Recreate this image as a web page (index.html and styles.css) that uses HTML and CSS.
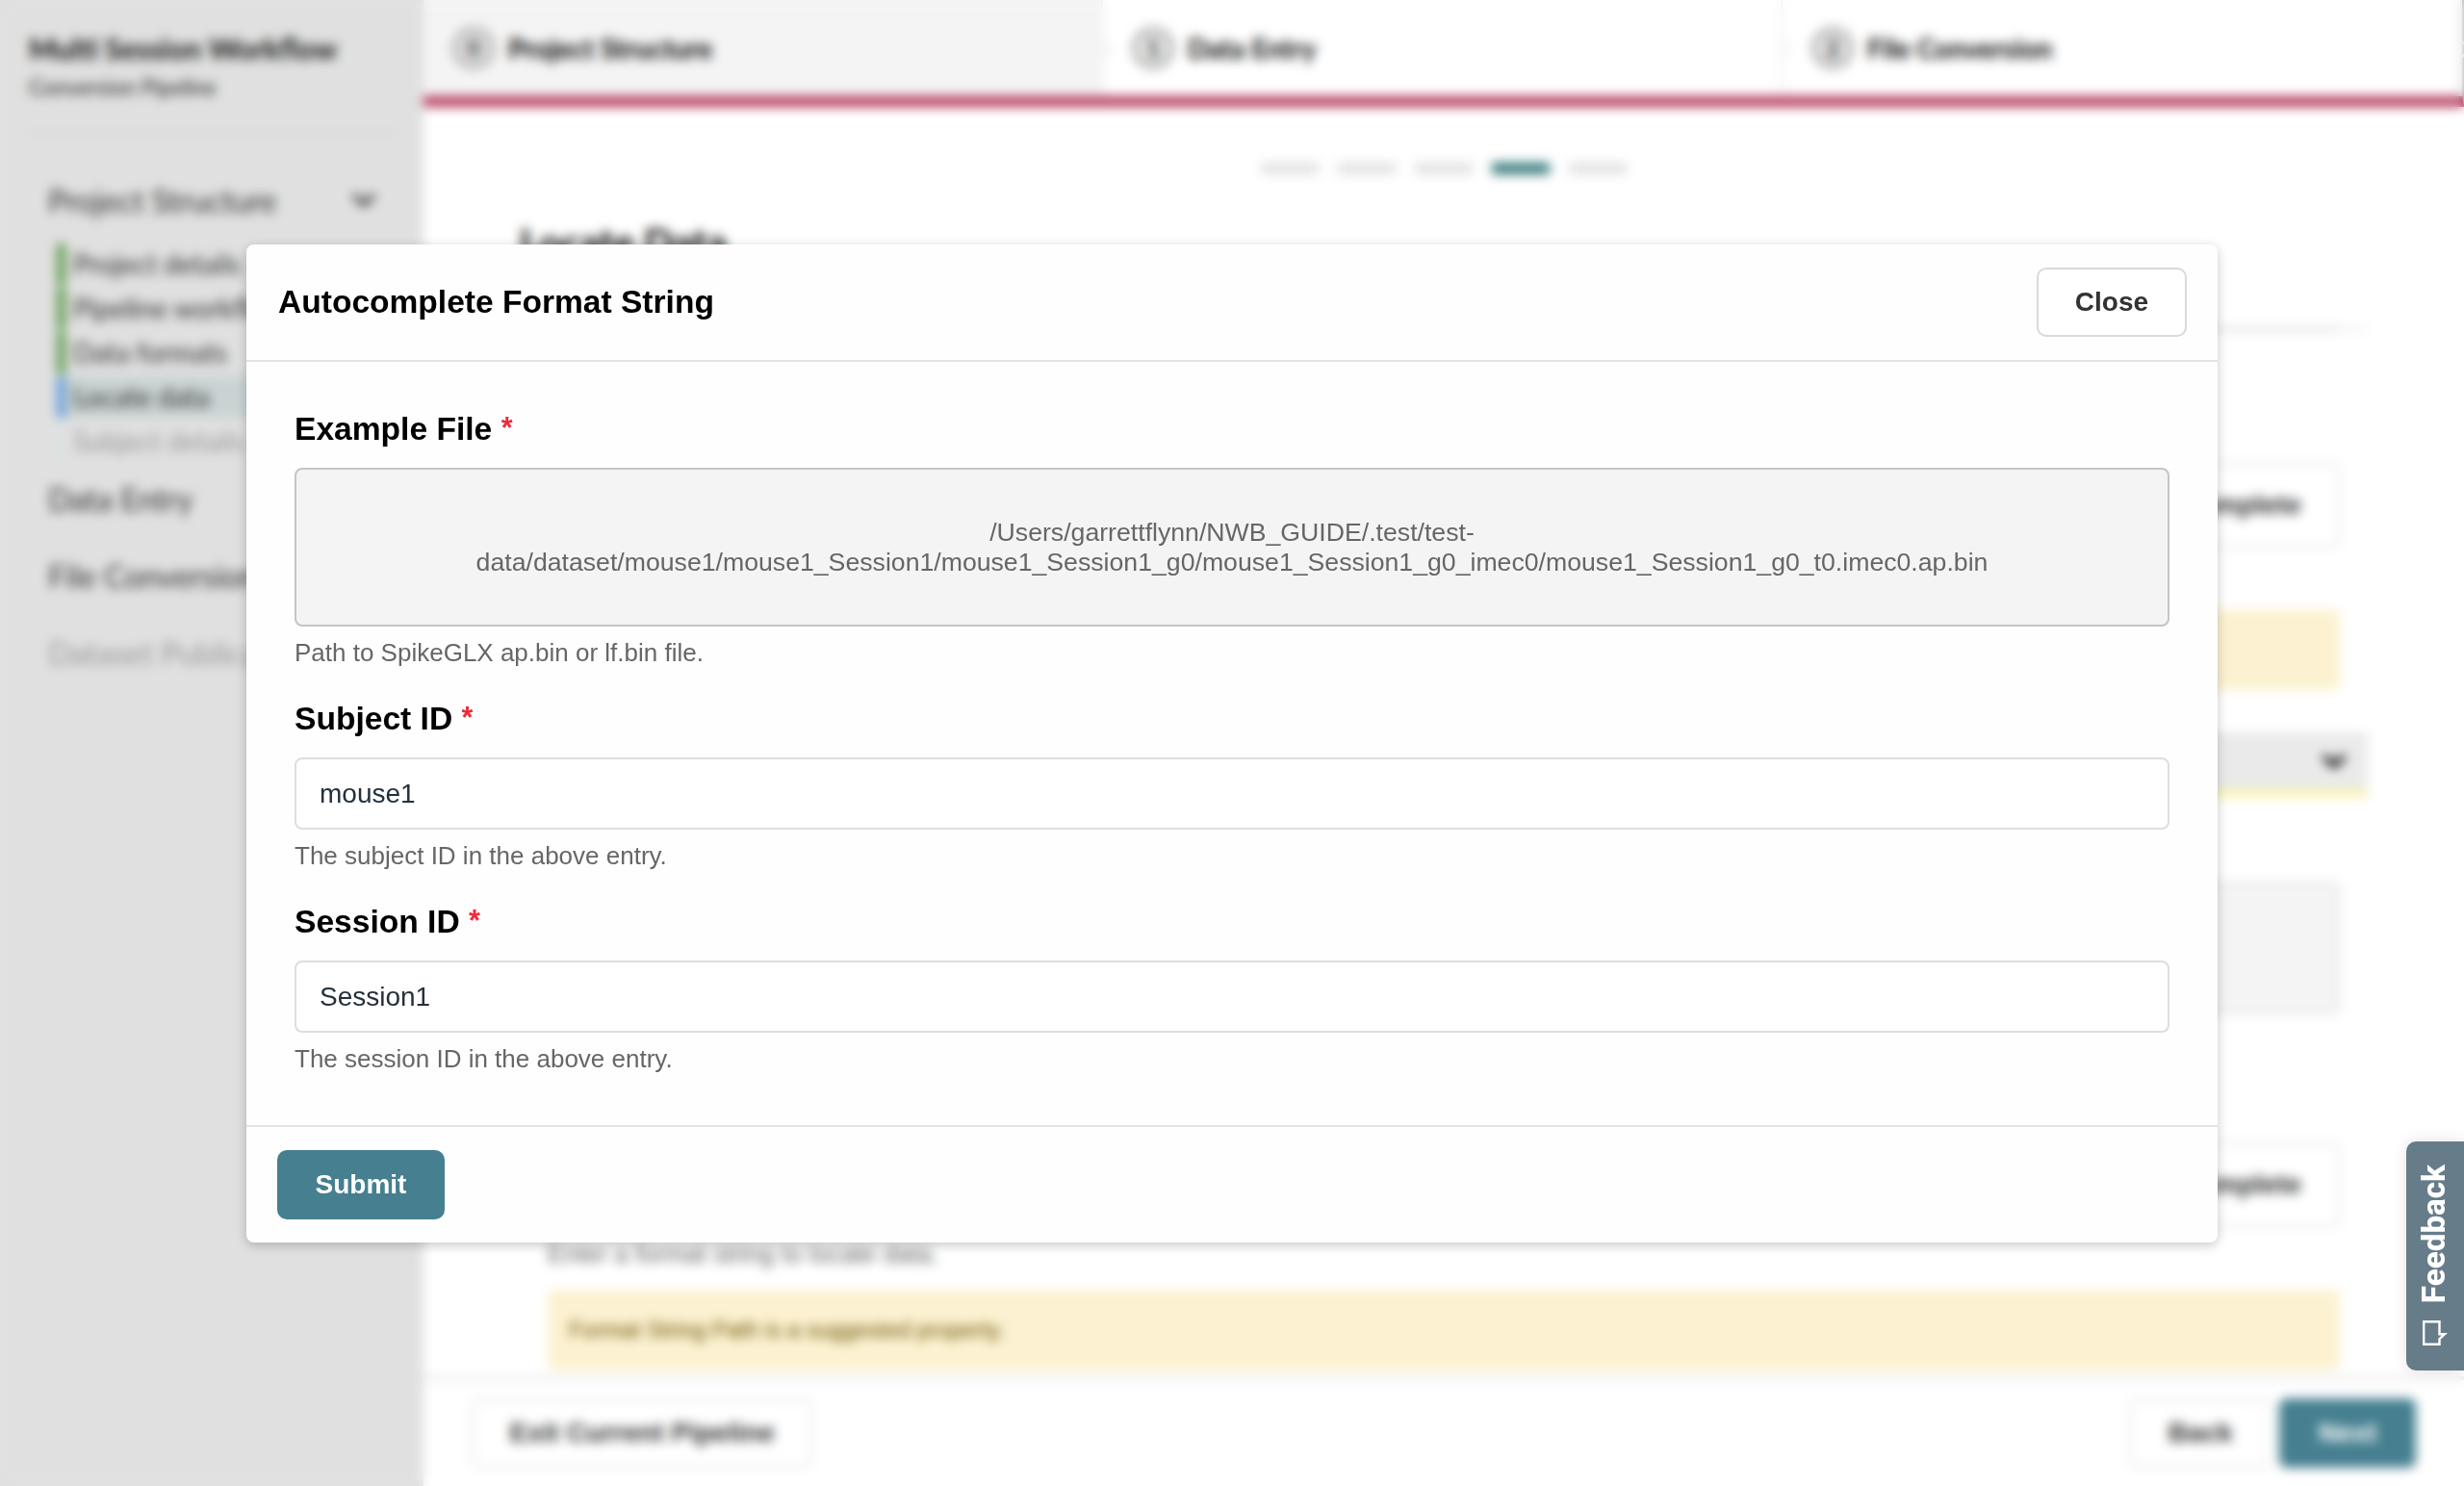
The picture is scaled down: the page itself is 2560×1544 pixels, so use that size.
FILE: index.html
```html
<!DOCTYPE html>
<html lang="en">
<head>
<meta charset="utf-8">
<title>NWB GUIDE</title>
<link rel="stylesheet" href="styles.css">
</head>
<body>
<div class="app">
  <aside class="sidebar">
    <div class="brand">
      <h1>Multi Session Workflow</h1>
      <p>Conversion Pipeline</p>
    </div>
    <nav class="sections">
      <div class="section open"><span>Project Structure</span><svg class="chev" viewBox="0 0 24 16"><path d="M2 3l10 9 10-9" fill="none" stroke="currentColor" stroke-width="4.500"/></svg></div>
      <ul class="steps">
        <li class="done">Project details</li>
        <li class="done">Pipeline workflow</li>
        <li class="done">Data formats</li>
        <li class="current">Locate data</li>
        <li class="todo">Subject details</li>
      </ul>
      <div class="section">Data Entry</div>
      <div class="section">File Conversion</div>
      <div class="section disabled">Dataset Publication</div>
    </nav>
  </aside>
  <div class="page">
    <header class="tabs">
      <div class="tab selected"><b>0</b><span>Project Structure</span></div>
      <div class="tab"><b>1</b><span>Data Entry</span></div>
      <div class="tab"><b>2</b><span>File Conversion</span></div>
    </header>
    <main class="content">
      <div class="progress"><i></i><i></i><i></i><i class="on"></i><i></i></div>
      <h2>Locate Data</h2>
      <hr>
      <section class="group">
        <div class="row"><button class="btn">Autocomplete</button></div>
        <div class="warning"></div>
      </section>
      <div class="accordion"><svg class="chev" viewBox="0 0 24 16"><path d="M2 3l10 9 10-9" fill="none" stroke="currentColor" stroke-width="5"/></svg></div>
      <section class="group second">
        <div class="dropzone"></div>
        <div class="row"><button class="btn">Autocomplete</button></div>
        <p class="hint">Enter a format string to locate data.</p>
        <div class="warning">Format String Path is a suggested property.</div>
      </section>
    </main>
    <footer class="actions">
      <button class="btn">Exit Current Pipeline</button>
      <div class="right"><button class="btn">Back</button><button class="btn primary">Next</button></div>
    </footer>
  </div>
</div>

<div class="overlay">
  <div class="modal" role="dialog">
    <header class="modal-head">
      <h3>Autocomplete Format String</h3>
      <button class="button">Close</button>
    </header>
    <div class="modal-body">
      <div class="field">
        <label>Example File <em>*</em></label>
        <div class="file">/Users/garrettflynn/NWB_GUIDE/.test/test-<br>data/dataset/mouse1/mouse1_Session1/mouse1_Session1_g0/mouse1_Session1_g0_imec0/mouse1_Session1_g0_t0.imec0.ap.bin</div>
        <p>Path to SpikeGLX ap.bin or lf.bin file.</p>
      </div>
      <div class="field">
        <label>Subject ID <em>*</em></label>
        <div class="input">mouse1</div>
        <p>The subject ID in the above entry.</p>
      </div>
      <div class="field">
        <label>Session ID <em>*</em></label>
        <div class="input">Session1</div>
        <p>The session ID in the above entry.</p>
      </div>
    </div>
    <footer class="modal-foot"><button class="button primary">Submit</button></footer>
  </div>
</div>

<div class="feedback">
  <span>Feedback</span>
  <svg viewBox="0 0 26 26"><path d="M1.200 1.200H17.500V14.200H23L17.500 19.200V24.800H1.200Z" fill="none" stroke="#fff" stroke-width="2.400"/></svg>
</div>
</body>
</html>
```
FILE: styles.css
```css
* { box-sizing: border-box; }
body { margin: 0; width: 2560px; height: 1544px; overflow: hidden; background: #fff; font-family: "Liberation Sans", Arial, sans-serif; color: #000; }
h1, h2, h3, p, ul { margin: 0; padding: 0; font-weight: normal; }
button { font-family: inherit; margin: 0; }

.app { display: flex; width: 2560px; height: 1544px; }
.sidebar { width: 440px; flex: none; background: #e0e0e0; font-family: Lato, sans-serif; color: #333; }
.brand { margin: 0 30px; padding-top: 29px; height: 140px; border-bottom: 2px solid #d2d2d2; }
.brand h1 { font-size: 30px; line-height: 42px; font-weight: 700; color: #111; white-space: nowrap; }
.brand p { font-size: 22.400px; line-height: 40px; color: #222; }
.sections { padding-top: 40px; }
.section { display: flex; align-items: center; justify-content: space-between; height: 80px; padding: 0 49px 0 50px; font-size: 32px; white-space: nowrap; }
.section.open { height: 56px; }
.section.disabled { color: #999; }
.chev { width: 26px; height: 18px; }
.steps { list-style: none; margin: 17px 24px 0 59px; height: 225px; }
.steps li { height: 43px; margin-bottom: 3px; line-height: 42px; padding-left: 8px; border-left: 9px solid #5f9c50; font-size: 28px; white-space: nowrap; }
.steps .current { background: #cad3d3; border-color: #649ddb; }
.steps .todo { border-color: #dde1e1; color: #999; }

.page { flex: 1; display: flex; flex-direction: column; }
.tabs { display: flex; height: 111px; flex: none; border-bottom: 11px solid #b4375a; border-right: 2px solid #bbb; font-family: Lato, sans-serif; }
.tab { position: relative; width: 706px; flex: none; display: flex; align-items: center; gap: 14px; padding-left: 30px; border-right: 2px solid #ececec; font-size: 28px; font-weight: 700; }
.tab.selected { background: #f4f4f4; }
.tab::after { content: ""; position: absolute; right: -8px; top: 43px; width: 14px; height: 14px; background: inherit; border: 2px solid #ececec; border-width: 2px 2px 0 0; transform: rotate(45deg); }
.tab b { width: 44px; height: 44px; border-radius: 50%; border: 5px solid #aaa; background: #e9e9e9; font-size: 24px; line-height: 34px; text-align: center; color: #333; }
.content { flex: 1; overflow: hidden; }
.progress { display: flex; justify-content: center; gap: 20px; padding-top: 58px; }
.progress i { width: 60px; height: 12px; background: #e2e2e2; }
.progress .on { background: #37797c; }
.content h2 { margin: 48px 0 0 100px; font-family: Lato, sans-serif; font-size: 40.400px; line-height: 46px; font-weight: 700; }
.content hr { margin: 65px 100px 0; height: 4px; border: 0; background: linear-gradient(90deg, #ddd 98.500%, #f1f1f1 98.500%); }
.group { margin: 137px 129px 0; }
.row { display: flex; justify-content: flex-end; }
.btn { height: 88px; padding: 0 38px; border: 2px solid #e3e3e3; border-radius: 8px; background: #fff; font-size: 28px; font-weight: 700; color: #333; }
.warning { margin-top: 64px; height: 84px; line-height: 84px; padding-left: 22px; border-radius: 6px; background: #fcf2d1; font-size: 23.500px; color: #6b5200; }
.accordion { display: flex; justify-content: flex-end; align-items: center; margin: 44px 100px 0; height: 68px; padding-right: 22px; background: #eaeaea; border-bottom: 9px solid #faf5b4; }
.second { margin-top: 87px; }
.dropzone { height: 138px; margin-bottom: 133px; border: 2px solid #ddd; border-radius: 8px; background: #f4f4f4; }
.hint { margin-top: 13px; font-size: 26px; line-height: 30px; color: #666; }
.second .warning { margin-top: 22px; }
.actions { flex: none; height: 114px; border-top: 4px solid #e8e8e8; background: #fff; display: flex; justify-content: space-between; align-items: center; padding: 0 50px; }
.actions .btn { height: 72px; padding: 0 37.500px; }
.right { display: flex; gap: 8px; }
.actions .right .btn { padding: 0 38.500px; }
.actions .btn.primary { background: #457f90; border-color: #457f90; color: #fff; }

.overlay { position: absolute; inset: 0; display: flex; align-items: flex-start; justify-content: center; padding-top: 254px; backdrop-filter: blur(6px); }
.modal { width: 2048px; height: 1037px; display: flex; flex-direction: column; background: #fefefe; border-radius: 8px; box-shadow: 0 3px 12px rgba(0,0,0,.22); }
.modal-head { height: 122px; flex: none; display: flex; align-items: center; justify-content: space-between; padding: 0 32px 0 33px; border-bottom: 2px solid #e3e3e3; }
.modal-head h3 { font-size: 33.550px; font-weight: 700; }
.button { height: 72px; padding: 0 37.900px; border: 2px solid #d9d9d9; border-radius: 10px; background: #fff; font-size: 28px; font-weight: 700; color: #333; }
.button.primary { padding: 0 37.500px; background: #457f90; border-color: #457f90; color: #fff; }
.modal-body { flex: 1; padding: 50px 50px 0; }
.field label { display: block; font-size: 33.600px; line-height: 40px; font-weight: 700; }
.field em { font-style: normal; color: #ee2b3b; font-size: 30.500px; line-height: 0; position: relative; top: -2px; }
.file { margin-top: 20px; height: 165px; display: flex; align-items: center; justify-content: center; border: 2px solid #c4c4c4; border-radius: 8px; background: #f4f4f4; color: #666; font-size: 26.660px; line-height: 31px; text-align: center; }
.input { margin-top: 20.500px; height: 75px; line-height: 71px; padding-left: 24px; border: 2px solid #ddd; border-radius: 8px; background: #fff; color: #24303c; font-size: 28px; }
.field p { margin-top: 12px; font-size: 26px; line-height: 30px; color: #666; }
.field + .field { margin-top: 33.500px; }
.modal-foot { height: 122px; flex: none; border-top: 2px solid #e3e3e3; padding: 23.500px 32px; }

.feedback { position: absolute; left: 2500px; top: 1186px; width: 60px; height: 238px; display: flex; flex-direction: column; align-items: center; justify-content: flex-end; gap: 18px; padding: 0 0 26px; background: #667c89; border-radius: 10px 0 0 10px; box-shadow: 0 0 16px rgba(0,0,0,.12); color: #fff; }
.feedback span { margin-right: 3px; writing-mode: vertical-rl; transform: rotate(180deg); font-family: Roboto, sans-serif; font-weight: 800; font-size: 33.200px; line-height: 38px; }
.feedback svg { width: 26px; height: 26px; }
```
